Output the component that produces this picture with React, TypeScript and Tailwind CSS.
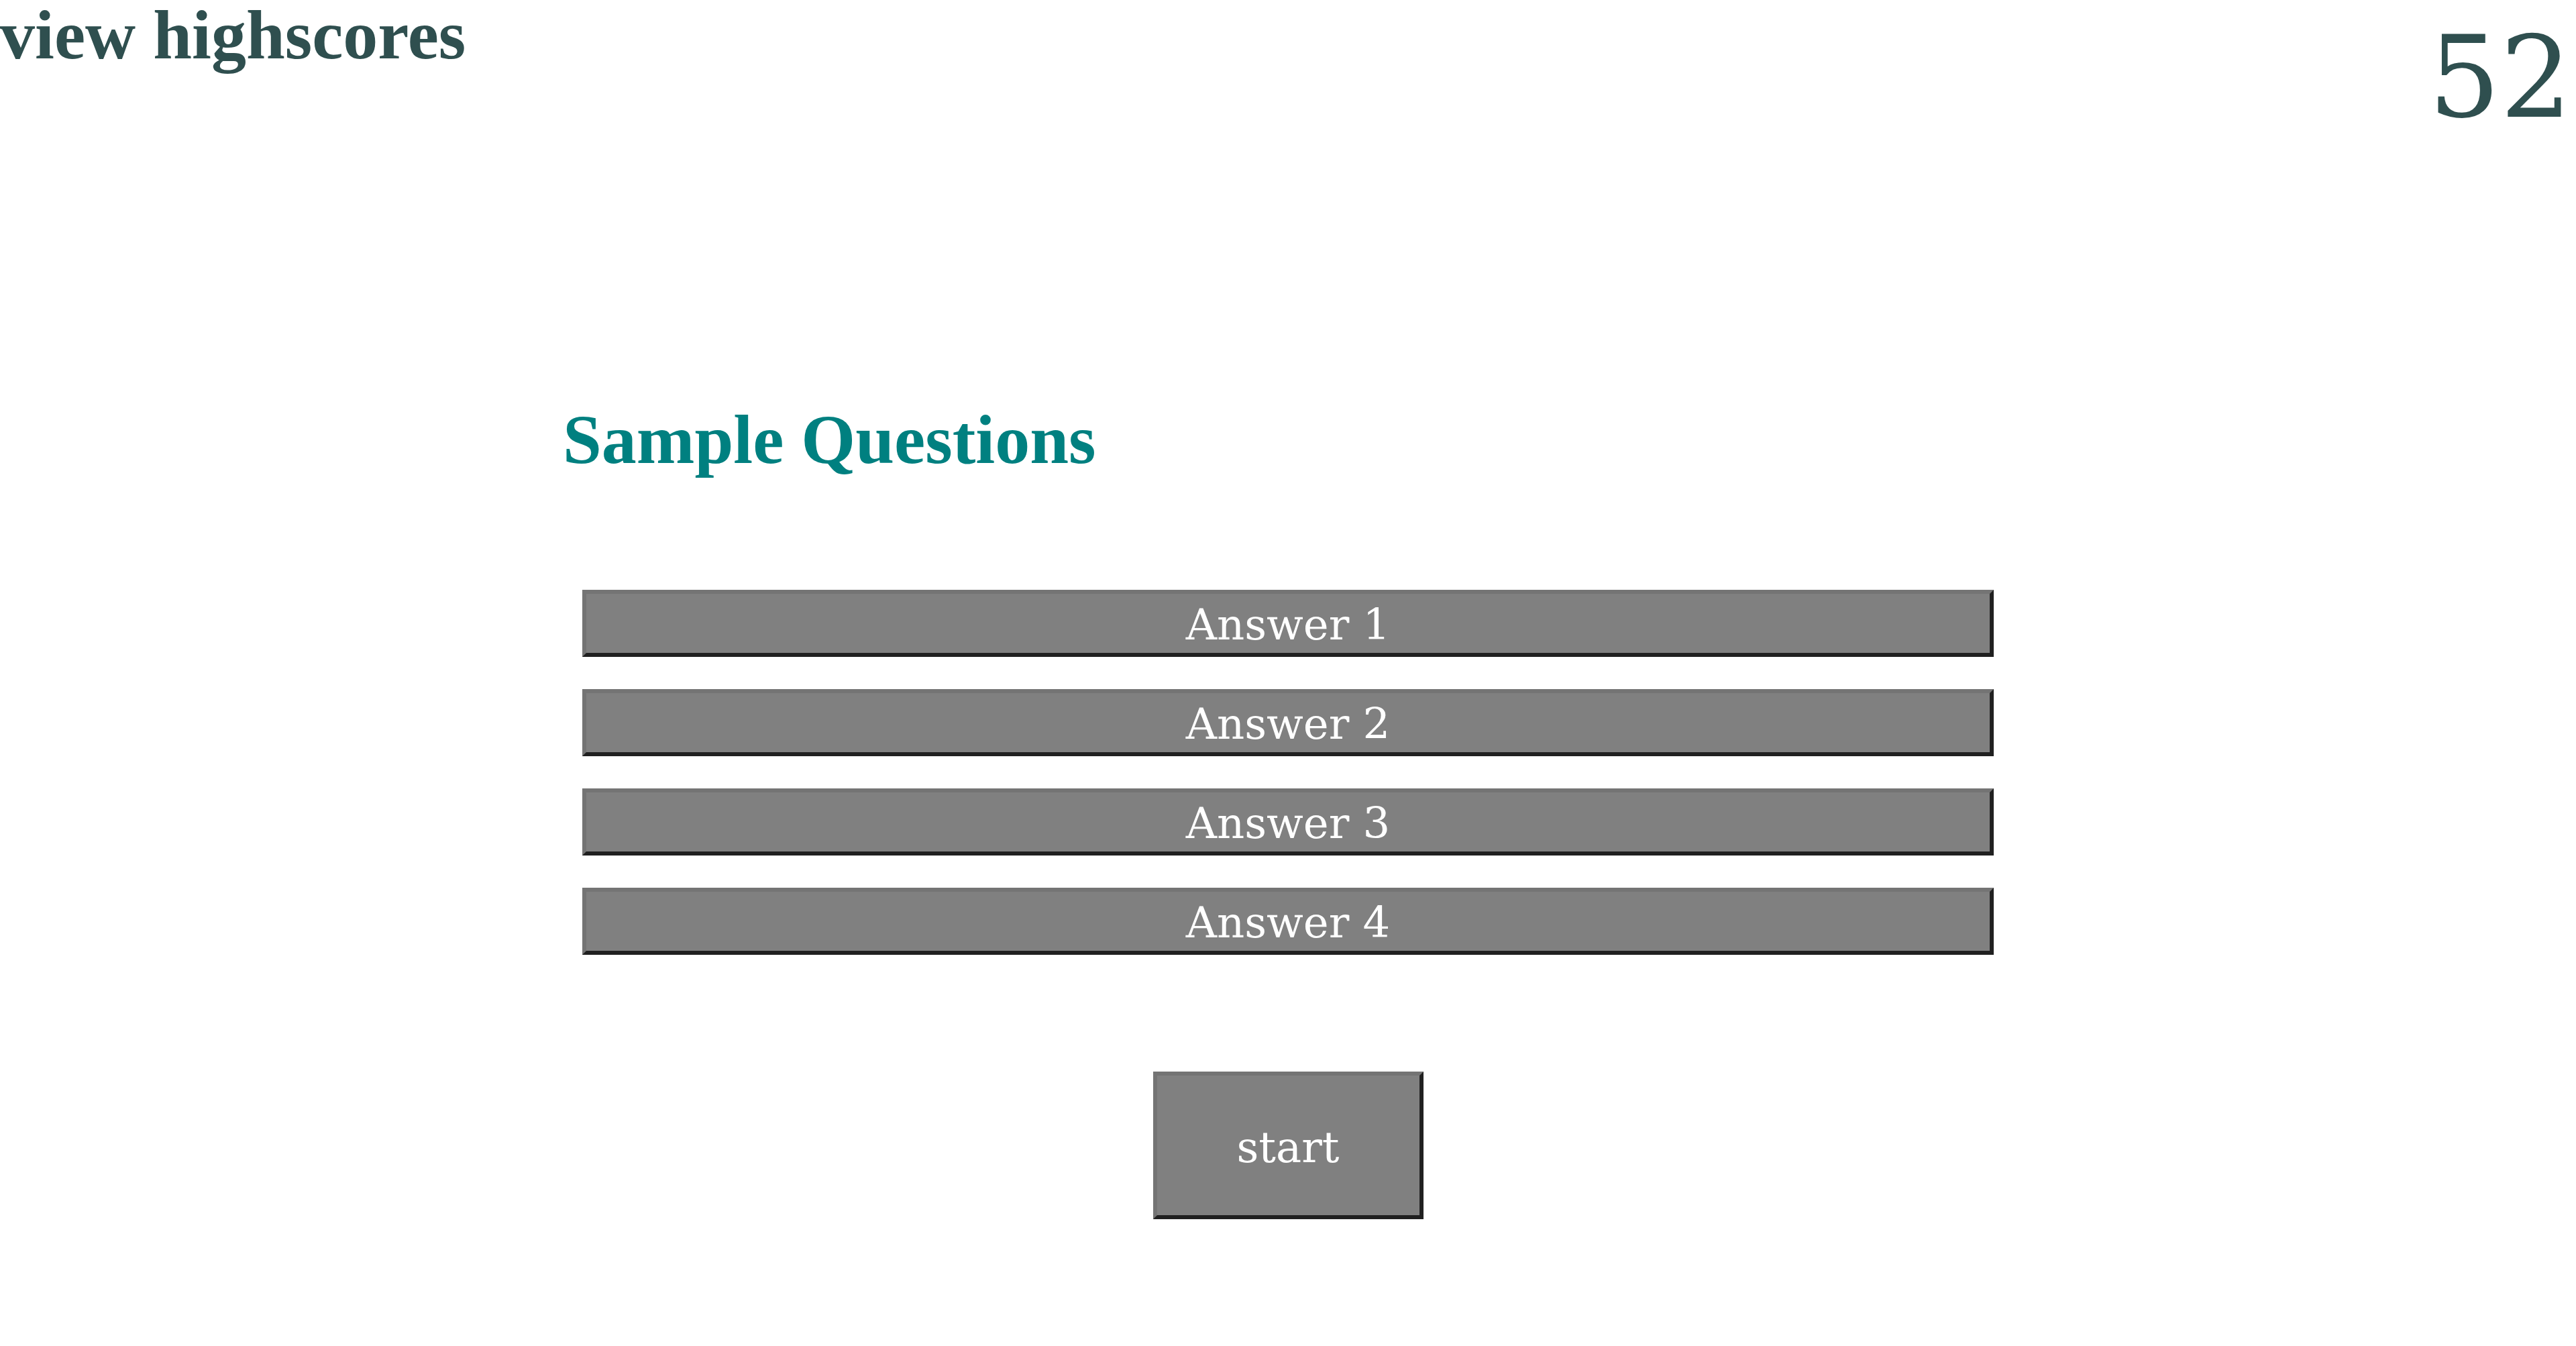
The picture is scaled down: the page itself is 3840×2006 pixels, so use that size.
import React from "react";

const answers = ["Answer 1", "Answer 2", "Answer 3", "Answer 4"];

export default function App() {
  return (
    <div className="min-h-screen w-full bg-white">
      <header className="flex items-start justify-between">
        <div className="whitespace-nowrap font-['Liberation_Serif',serif] text-[104px] font-bold leading-none text-[#2f4f4f]">
          view highscores
        </div>
        <div className="mt-[32px] pr-[6px] font-['DejaVu_Serif',serif] text-[168px] leading-none text-[#2f4f4f]">
          52
        </div>
      </header>

      <main className="mx-auto mt-[403px] w-[2200px]">
        <h1 className="whitespace-nowrap pl-[19px] font-['Liberation_Serif',serif] text-[104px] font-bold leading-none text-[#008080]">
          Sample Questions
        </h1>

        <div className="mt-[172px] flex flex-col gap-[48px] px-[48px]">
          {answers.map((a) => (
            <button
              key={a}
              className="flex h-[100px] w-full items-center justify-center border-[6px] border-t-[#747474] border-l-[#747474] border-b-[#202020] border-r-[#202020] bg-[#808080] pt-[4px] font-['DejaVu_Serif',serif] text-[64px] text-white"
            >
              {a}
            </button>
          ))}
        </div>

        <div className="mt-[174px] flex justify-center">
          <button className="flex h-[220px] w-[403px] items-center justify-center border-[6px] border-t-[#747474] border-l-[#747474] border-b-[#202020] border-r-[#202020] bg-[#808080] pt-[6px] font-['DejaVu_Serif',serif] text-[64px] text-white">
            start
          </button>
        </div>
      </main>
    </div>
  );
}
